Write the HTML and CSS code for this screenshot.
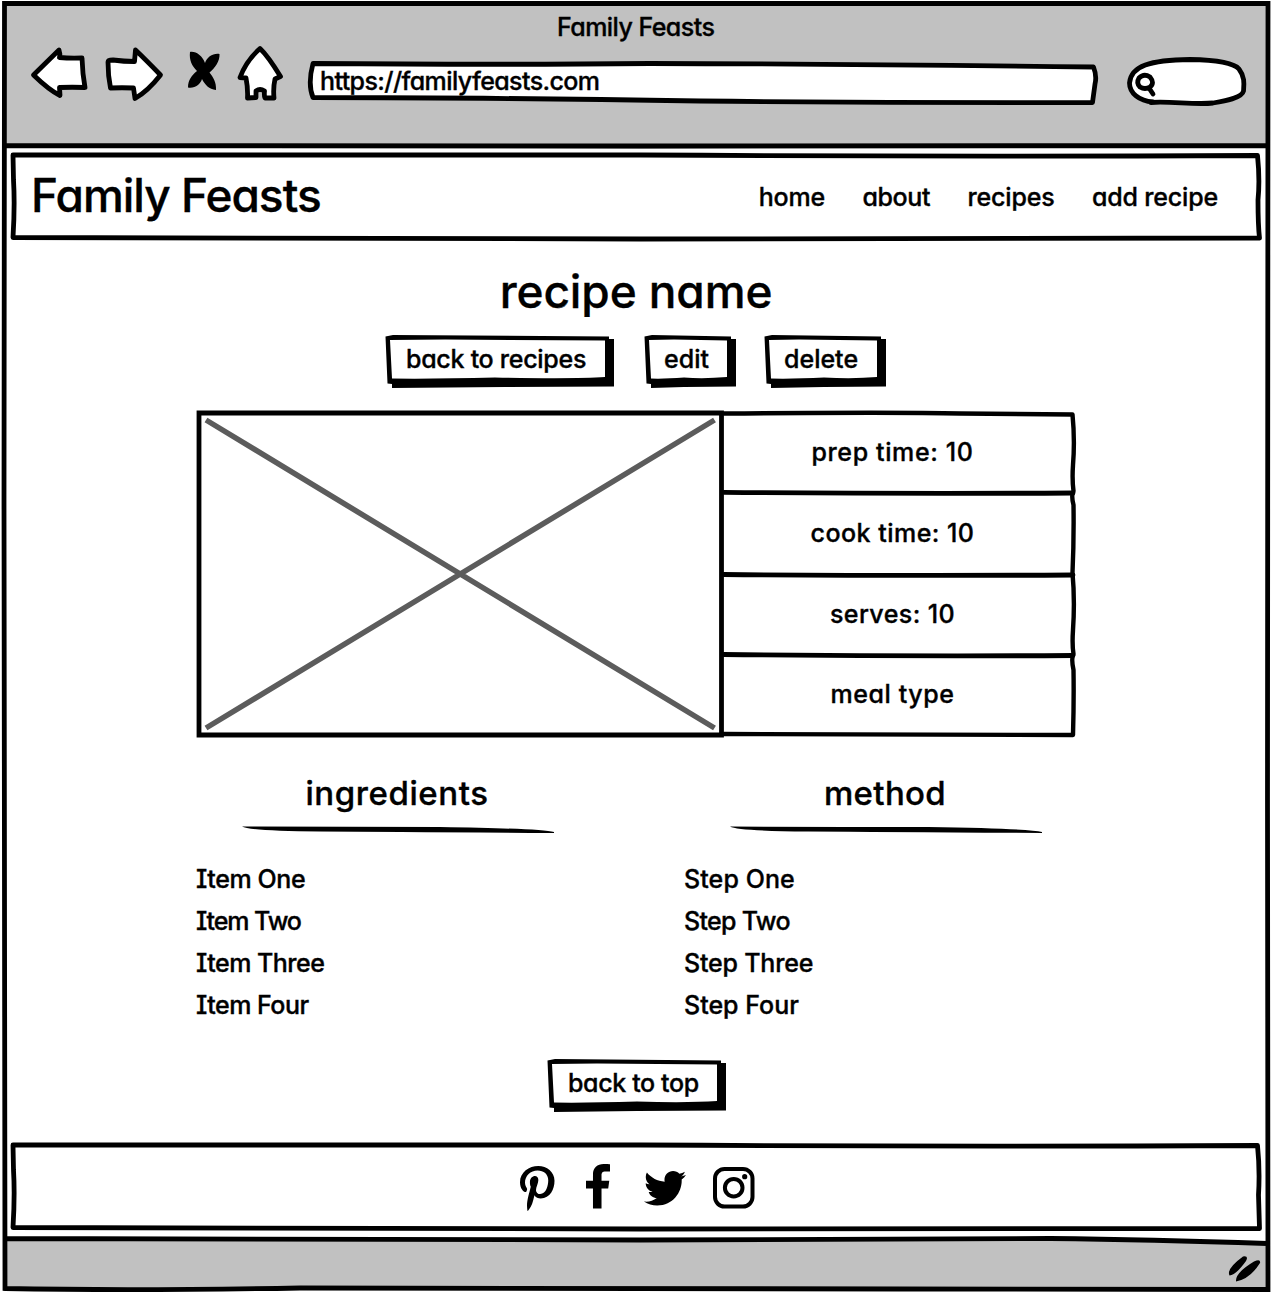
FILE: index.html
```html
<!DOCTYPE html>
<html lang="en">
<head>
<meta charset="utf-8">
<title>Family Feasts</title>
<link rel="stylesheet" href="styles.css">
</head>
<body>
<div class="window">
  <header class="chrome">
    <div class="window-title"><span class="t-title">Family Feasts</span></div>
    <div class="toolbar">
      <svg class="tool back" viewBox="30 46 60 60"><path d="M33.500 75 L59 50 Q60.500 54 59.500 57.500 Q70 58.500 82 58 Q82.500 74 85 87.500 Q72 87 59.500 87.500 L60 95.500 Q49 90 33.500 75Z"/></svg>
      <svg class="tool forward" viewBox="104 46 60 60"><path d="M108 62 Q108 60 113 60 Q124 61.500 134.500 61.500 L135.500 50 Q146 60 160.500 75 Q148 91 135 98.500 L133.500 88 Q122 87.500 110.500 88 Q108 76 108 62Z"/></svg>
      <svg class="tool stop" viewBox="186 46 36 60"><path class="solid" d="M190 52 C196 51 202.500 56 205 63 C207 57 213 53 219.500 54 C220 61 215 68 209.500 72.500 C213 77 216.500 82 216 90 C209 89 205 85 202 79 C200 85 195 88.500 188 87.500 C188 80 192 75 197 71 C192 66 189 60 190 52Z"/></svg>
      <svg class="tool home" viewBox="236 46 48 60"><path d="M260 48.500 Q268 56 280.500 76.500 L275 79 Q273 88 274 98 L265 98 Q264 96 264.500 91 Q260 88 256 91 L256 97.500 L247.500 98 Q248 88 246 78 L240 77.500 Q246 61 260 48.500Z"/></svg>
      <div class="address">
        <svg class="sketch" viewBox="306 60 793 46"><path d="M313 63.500 Q500 65 650 63.500 Q850 64 1093.500 67 Q1097 76 1095 84 L1092.500 102.500 Q900 103 700 101 Q480 97.500 313 97.500 Q307.500 84 313 63.500Z"/></svg>
        <span class="t-url">https://familyfeasts.com</span>
      </div>
      <svg class="tool search" viewBox="1125 46 123 60"><path d="M1153 102 C1139 101 1129.500 93 1129.500 83 C1131 66 1150 60 1190 59.500 C1215 60 1234 63 1239 69 C1245 77 1244 84 1243.500 91 C1242 98 1225 101 1213 103 C1195 105 1170 101 1151 102.500"/><path d="M1139 78 Q1144 73 1150 77 Q1155 83 1150 87 Q1145 90 1140 87 Q1136 83 1139 78Z M1149 88 L1153 94"/></svg>
    </div>
  </header>

  <div class="site-header">
    <svg class="sketch" viewBox="10 152 1252 90"><path d="M13 155 Q300 154 640 155 Q950 157 1257.500 155.500 Q1260 180 1258 200 Q1258 225 1259.500 238 Q900 238 640 239 Q300 238 13 237.500 Q15 205 13.500 180Z"/></svg>
    <div class="logo t-logo">Family Feasts</div>
    <nav class="nav">
      <a class="t-home">home</a><a class="t-about">about</a><a class="t-recipes">recipes</a><a class="t-add">add recipe</a>
    </nav>
  </div>

  <main class="content">
    <h1 class="t-name">recipe name</h1>
    <div class="actions">
      <button class="btn btn-recipes"><svg class="sketch" viewBox="0 0 229 53"><path class="solid" d="M.5 1.500 L8 0 L224 1.500 V4 H229 V51.500 L120 52 L7 53 V49 L2.500 48.500Z"/><path class="paper" d="M5 5 L60 4.500 L220 5.500 V42 Q190 44 110 42.500 Q50 44 7 43.500Z"/></svg><span class="t-back">back to recipes</span></button>
      <button class="btn btn-edit"><svg class="sketch" viewBox="0 0 92 53"><path class="solid" d="M.5 1.500 L8 0 L87 1.500 V4 H92 V51.500 L40 52 L7 53 V49 L2.500 48.500Z"/><path class="paper" d="M5 5 L30 4.500 L83 5.500 V42 Q60 44 40 42.500 Q20 44 7 43.500Z"/></svg><span class="t-edit">edit</span></button>
      <button class="btn btn-delete"><svg class="sketch" viewBox="0 0 122 53"><path class="solid" d="M.5 1.500 L8 0 L117 1.500 V4 H122 V51.500 L60 52 L7 53 V49 L2.500 48.500Z"/><path class="paper" d="M5 5 L35 4.500 L113 5.500 V42 Q90 44 60 42.500 Q30 44 7 43.500Z"/></svg><span class="t-delete">delete</span></button>
    </div>

    <section class="summary">
      <svg class="sketch" viewBox="196 410 880 328">
        <path class="cross" d="M206 420 L714.500 728 M206 728 L714.500 420"/>
        <path class="frame" d="M199 413 H721.500 V735 H199Z"/>
        <path class="thin" d="M724 413.500 Q900 412 960 413.500 L1072.500 414.500 Q1075 440 1073 465 Q1072 480 1073.500 491 Q1071 495 1073.500 505 Q1074 540 1072.500 573 Q1075 600 1073 630 Q1072 645 1073.500 654 Q1071 658 1073.500 670 Q1074 700 1073 735 Q900 734 724 734"/>
        <path d="M724 492.300 Q900 494 1073 493 M724 574.500 Q900 576 1073 575 M724 654.500 Q900 656.500 1073 655.500"/>
      </svg>
      <div class="photo"></div>
      <div class="facts">
        <div><span class="t-prep">prep time: 10</span></div>
        <div><span class="t-cook">cook time: 10</span></div>
        <div><span class="t-serves">serves: 10</span></div>
        <div><span class="t-meal">meal type</span></div>
      </div>
    </section>

    <section class="columns">
      <div class="column">
        <h2 class="t-ingredients">ingredients</h2>
        <svg class="rule" viewBox="242 825 312 10"><path d="M242 826.500 Q340 827 440 827 Q540 828.500 554 832 V833 Q400 832 320 831.500 Q250 831 242 826.500Z"/></svg>
        <ul><li class="t-one">Item One</li><li class="t-two">Item Two</li><li class="t-three">Item Three</li><li class="t-four">Item Four</li></ul>
      </div>
      <div class="column">
        <h2 class="t-method">method</h2>
        <svg class="rule" viewBox="242 825 312 10"><path d="M242 826.500 Q340 827 440 827 Q540 828.500 554 832 V833 Q400 832 320 831.500 Q250 831 242 826.500Z"/></svg>
        <ul><li class="t-sone">Step One</li><li class="t-stwo">Step Two</li><li class="t-sthree">Step Three</li><li class="t-sfour">Step Four</li></ul>
      </div>
    </section>

    <button class="btn btn-top"><svg class="sketch" viewBox="0 0 179 53"><path class="solid" d="M.5 1.500 L8 0 L174 1.500 V4 H179 V51.500 L90 52 L7 53 V49 L2.500 48.500Z"/><path class="paper" d="M5 5 L50 4.500 L170 5.500 V42 Q140 44 90 42.500 Q40 44 7 43.500Z"/></svg><span class="t-top">back to top</span></button>
  </main>

  <footer class="social">
    <svg class="sketch" viewBox="10 1142 1252 90"><path d="M13 1145 Q300 1144 640 1145 Q950 1147 1257.500 1145.500 Q1260 1170 1258.500 1195 L1259.500 1228.500 Q900 1228 640 1229 Q300 1228 13 1227.500 Q15 1195 13.500 1170Z"/></svg>
    <svg class="icon pinterest" viewBox="0 6 384 500" preserveAspectRatio="none"><path d="M204 6.500C101.400 6.500 0 74.900 0 185.600 0 256 39.600 296 63.600 296c9.900 0 15.600-27.600 15.600-35.400 0-9.300-23.700-29.100-23.700-67.800 0-80.400 61.200-137.400 140.400-137.400 68.100 0 118.500 38.700 118.500 109.800 0 53.100-21.300 152.700-90.300 152.700-24.900 0-46.200-18-46.200-43.800 0-37.800 26.400-74.400 26.400-113.400 0-66.200-93.900-54.200-93.900 25.800 0 16.800 2.100 35.400 9.600 50.700-13.800 59.400-42 147.900-42 209.100 0 18.900 2.700 37.500 4.500 56.400 3.400 3.800 1.700 3.400 6.900 1.500 50.400-69 48.600-82.500 71.400-172.800 12.300 23.400 44.100 36 69.300 36 106.200 0 153.900-103.500 153.900-196.800C384 71.300 298.200 6.500 204 6.500z"/></svg>
    <svg class="icon facebook" viewBox="0 0 264 512" preserveAspectRatio="none"><path d="M76.700 512V283H0v-91h76.700v-71.700C76.700 42.400 124.300 0 193.800 0c33.300 0 61.900 2.500 70.200 3.600V85h-48.200c-37.800 0-45.100 18-45.100 44.300V192H256l-11.700 91h-73.600v229"/></svg>
    <svg class="icon twitter" viewBox="0 48 512 416" preserveAspectRatio="none"><path d="M459.370 151.716c.325 4.548.325 9.097.325 13.645 0 138.720-105.583 298.558-298.558 298.558-59.452 0-114.680-17.219-161.137-47.106 8.447.974 16.568 1.299 25.340 1.299 49.055 0 94.213-16.568 130.274-44.832-46.132-.975-84.792-31.188-98.112-72.772 6.498.974 12.995 1.624 19.818 1.624 9.421 0 18.843-1.300 27.614-3.573-48.081-9.747-84.143-51.980-84.143-102.985v-1.299c13.969 7.797 30.214 12.670 47.431 13.319-28.264-18.843-46.781-51.005-46.781-87.391 0-19.492 5.197-37.360 14.294-52.954 51.655 63.675 129.300 105.258 216.365 109.807-1.624-7.797-2.599-15.918-2.599-24.040 0-57.828 46.782-104.934 104.934-104.934 30.213 0 57.502 12.670 76.670 33.137 23.715-4.548 46.456-13.320 66.599-25.340-7.798 24.366-24.366 44.833-46.132 57.827 21.117-2.273 41.584-8.122 60.426-16.243-14.292 20.791-32.161 39.308-52.628 54.253z"/></svg>
    <svg class="icon instagram" viewBox="0 0 42 42"><rect x="2" y="2" width="37.500" height="37.500" rx="9.500"/><circle cx="20.700" cy="20.700" r="8.800"/><circle class="dot" cx="31.700" cy="9.700" r="2.600"/></svg>
  </footer>

  <div class="status-bar">
    <svg viewBox="1226 1250 40 30"><path d="M1229.500 1275.500 Q1226 1269 1243 1256.500 Q1249 1255.500 1246 1261 Q1236 1275 1229.500 1275.500Z M1236 1281.500 Q1235 1273 1254 1261.500 Q1261 1258.500 1260 1263 Q1250 1279 1236 1281.500Z"/></svg>
  </div>
  <svg class="sketch outline" viewBox="0 0 1272 1294"><path d="M4.500 3.500 L1268 3.500 Q1267 400 1267.500 800 Q1268.500 1100 1268 1289.500 Q1100 1290 900 1289 Q500 1287 300 1288 Q130 1291 5 1288.500 Q3 800 4 500 Q4 200 4.500 3.500Z M4.500 145.300 Q400 147 640 146 Q900 145 1267 145.300 M5 1238.500 Q300 1240.500 640 1240 Q900 1239.500 1050 1238.500 Q1150 1239.500 1267 1243.500"/></svg>
</div>
</body>
</html>
```
FILE: styles.css
```css
* { box-sizing: border-box; }
body {
  margin: 0;
  background: #fff;
  color: #000;
  font: 500 25px/30px Inter, "Noto Sans", sans-serif;
  font-feature-settings: "cv11", "cv08";
  -webkit-text-stroke: .35px #000;
  white-space: nowrap;
}
h1, h2, ul { margin: 0; padding: 0; font-weight: inherit; list-style: none; }
svg { display: block; overflow: visible; }
.window { position: relative; width: 1272px; height: 1294px; display: flex; flex-direction: column; }
.sketch { position: absolute; inset: 0; width: 100%; height: 100%; z-index: 0; }
.sketch path, .tool path { fill: #fff; stroke: #000; stroke-width: 4.8; stroke-linejoin: round; stroke-linecap: round; }
.sketch .solid, .tool .solid { fill: #000; stroke: none; }
.sketch .paper { fill: #fff; stroke: none; }
.outline { pointer-events: none; }
.sketch.outline path { fill: none; stroke-linejoin: miter; stroke-linecap: butt; }

.chrome { height: 146px; margin: 3px 4px -1px; background: #c1c1c1; }
.window-title { height: 43px; padding-top: 9px; padding-left: 553px; }
.toolbar { display: flex; height: 60px; padding-left: 26px; }
.tool { height: 60px; flex: none; }
.back { width: 60px; margin-right: 14px; }
.forward { width: 60px; margin-right: 22px; }
.stop { width: 36px; margin-right: 14px; }
.home { width: 48px; margin-right: 22px; }
.address { position: relative; width: 793px; height: 46px; margin: 14px 26px 0 0; padding: 6px 0 0 14px; }
.address span { position: relative; }
.search { width: 123px; }

.site-header { position: relative; display: flex; justify-content: space-between; align-items: center; height: 90px; margin: 4px 10px 0; padding: 0 44px 0 21px; }
.logo, h1 { font-size: 46px; line-height: 60px; }
.logo { position: relative; margin-bottom: 4px; }
.nav { position: relative; display: flex; gap: 37.5px; }

.content { display: flex; flex-direction: column; align-items: center; padding-top: 19px; }
.actions { display: flex; margin-top: 14px; margin-right: 1px; }
.btn { position: relative; display: flex; align-items: center; height: 53px; padding: 0 0 5px 20px; border: 0; background: none; color: inherit; font: inherit; font-feature-settings: inherit; letter-spacing: inherit; }
.btn span { position: relative; }
.btn-recipes { width: 229px; margin-right: 30px; padding-left: 21px; }
.btn-edit { width: 92px; margin-right: 28px; }
.btn-delete { width: 122px; }
.btn-top { width: 179px; margin-top: 33px; margin-left: 1px; padding-left: 21px; }

.summary { position: relative; display: grid; grid-template-columns: 526px 354px; width: 880px; height: 328px; margin-top: 22px; }
.summary .sketch path { fill: none; }
.sketch .cross { stroke: #5c5c5c; stroke-width: 5.5; stroke-linecap: butt; }
.sketch .frame { stroke-linejoin: miter; }
.sketch .thin { stroke-width: 4.4; }
.facts { position: relative; display: grid; grid-template-rows: 80px 81px 81px 80px; padding-top: 2px; }
.facts div { display: flex; align-items: center; justify-content: center; padding-right: 13px; }

.columns { display: grid; grid-template-columns: 402px 402px; column-gap: 86px; width: 890px; margin: 35px 0 0 10px; }
h2 { font-size: 33px; line-height: 40px; text-align: center; }
.rule { width: 312px; height: 10px; margin: 12px auto 23px 46px; }
li { line-height: 42px; }

.social { position: relative; display: flex; height: 90px; margin: 30px 10px 0; padding-left: 510px; }
.icon { position: relative; flex: none; fill: #000; }
.pinterest { width: 34.5px; height: 45px; margin: 23.5px 31.5px 0 0; }
.facebook { width: 24px; height: 44.5px; margin: 22px 34px 0 0; }
.twitter { width: 42px; height: 34.5px; margin: 28.5px 27px 0 0; }
.instagram { width: 42px; height: 42px; margin-top: 25px; fill: none; stroke: #000; stroke-width: 4; }
.instagram .dot { fill: #000; stroke: none; }

.status-bar { height: 50px; margin: 8px 4px 0; padding: 10px 2px 0; background: #c1c1c1; clip-path: polygon(0 0, 83% 0, 100% 4px, 100% 100%, 0 100%); }
.status-bar svg { width: 40px; height: 30px; margin-left: auto; }

/* Per-label tracking */
.t-title { letter-spacing: -.55px; }
.t-url { letter-spacing: -.6px; }
.t-logo { letter-spacing: -1px; }
.t-home, .t-recipes, .t-add { letter-spacing: -.18px; }
.t-about { letter-spacing: -.4px; }
.t-name { letter-spacing: -.1px; }
.t-back { letter-spacing: -.27px; }
.t-top { letter-spacing: -.37px; }
.t-prep { letter-spacing: .63px; }
.t-cook { letter-spacing: .48px; }
.t-serves { letter-spacing: .42px; }
.t-meal { letter-spacing: .58px; }
.t-ingredients { letter-spacing: .58px; }
.t-method { letter-spacing: .35px; }
.t-one { letter-spacing: -.4px; }
.t-two { letter-spacing: -1.1px; }
.t-three, .t-four { letter-spacing: -.5px; }
.t-sone { letter-spacing: .1px; }
.t-stwo { letter-spacing: -.7px; }
.t-sthree { letter-spacing: -.2px; }
```
